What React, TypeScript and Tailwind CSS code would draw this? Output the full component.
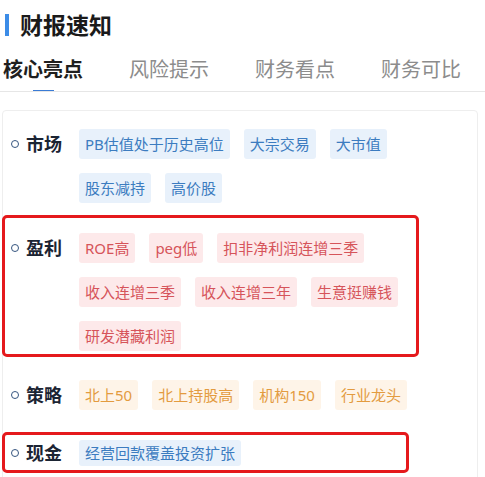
import React from "react";

type Tone = "blue" | "red" | "orange";

const toneClass: Record<Tone, string> = {
  blue: "bg-[#e8f1fb] text-[#3c7cc0]",
  red: "bg-[#fde9ea] text-[#d6545a]",
  orange: "bg-[#fef4e8] text-[#e39b3f]",
};

const sections: { label: string; tone: Tone; tags: string[]; gap: string }[] = [
  {
    label: "市场",
    tone: "blue",
    tags: ["PB估值处于历史高位", "大宗交易", "大市值", "股东减持", "高价股"],
    gap: "mt-0",
  },
  {
    label: "盈利",
    tone: "red",
    tags: ["ROE高", "peg低", "扣非净利润连增三季", "收入连增三季", "收入连增三年", "生意挺赚钱", "研发潜藏利润"],
    gap: "mt-[30px]",
  },
  {
    label: "策略",
    tone: "orange",
    tags: ["北上50", "北上持股高", "机构150", "行业龙头"],
    gap: "mt-[29px]",
  },
];

const tabs = ["核心亮点", "风险提示", "财务看点", "财务可比"];

const Label = ({ text }: { text: string }) => (
  <div className="flex items-center h-[30px] w-[76px] shrink-0 pl-[8px]">
    <span className="w-[8px] h-[8px] rounded-full border border-[#35557f]" />
    <span className="ml-[7px] text-[18px] font-bold text-[#1b2433] leading-none">{text}</span>
  </div>
);

const App = () => {
  return (
    <div
      className="relative w-[485px] h-[477px] bg-white overflow-hidden"
      style={{ fontFamily: '"Noto Sans", "Noto Sans CJK SC", sans-serif' }}
    >
      {/* header */}
      <div className="flex items-center pt-[8px] h-[42px]">
        <span className="ml-[5px] w-[4px] h-[22px] bg-[#3c8ce7]" />
        <span className="ml-[11px] text-[23px] font-bold text-[#1a1a1a] leading-none">财报速知</span>
      </div>

      {/* tabs */}
      <div className="flex gap-[46px] pl-[3px] pt-[15px] border-b border-[#e6e6e6] h-[50px]">
        {tabs.map((t, i) => (
          <div key={t} className="flex flex-col items-center w-[80px]">
            <span
              className={
                i === 0
                  ? "text-[20px] leading-[26px] font-semibold text-[#1f1f1f]"
                  : "text-[20px] leading-[26px] text-[#8c8c8c]"
              }
            >
              {t}
            </span>
            {i === 0 && <span className="mt-[7px] w-[21px] h-[2px] bg-[#3a7bd5]" />}
          </div>
        ))}
      </div>

      {/* card */}
      <div className="mt-[18px] ml-[2px] w-[476px] h-[400px] border border-[#eeeeee] rounded-t-[4px] pt-[18px]">
        {sections.map((s) => (
          <div key={s.label} className={`flex items-start ${s.gap}`}>
            <Label text={s.label} />
            <div className="flex flex-wrap gap-[14px] w-[384px]">
              {s.tags.map((tag) => (
                <span
                  key={tag}
                  className={`h-[30px] px-[6px] flex items-center rounded-[3px] text-[15px] leading-none ${toneClass[s.tone]}`}
                >
                  {tag}
                </span>
              ))}
            </div>
          </div>
        ))}
        <div className="flex items-center mt-[28px]">
          <Label text="现金" />
          <span className={`h-[26px] px-[6px] flex items-center rounded-[3px] text-[15px] leading-none ${toneClass.blue}`}>
            经营回款覆盖投资扩张
          </span>
        </div>
      </div>

      {/* annotation boxes */}
      <div className="absolute left-[2px] top-[215px] w-[417px] h-[142px] border-[3px] border-[#e5191c] rounded-[5px]" />
      <div className="absolute left-[2px] top-[432px] w-[407px] h-[41px] border-[3px] border-[#e5191c] rounded-[5px]" />
    </div>
  );
};

export default App;
